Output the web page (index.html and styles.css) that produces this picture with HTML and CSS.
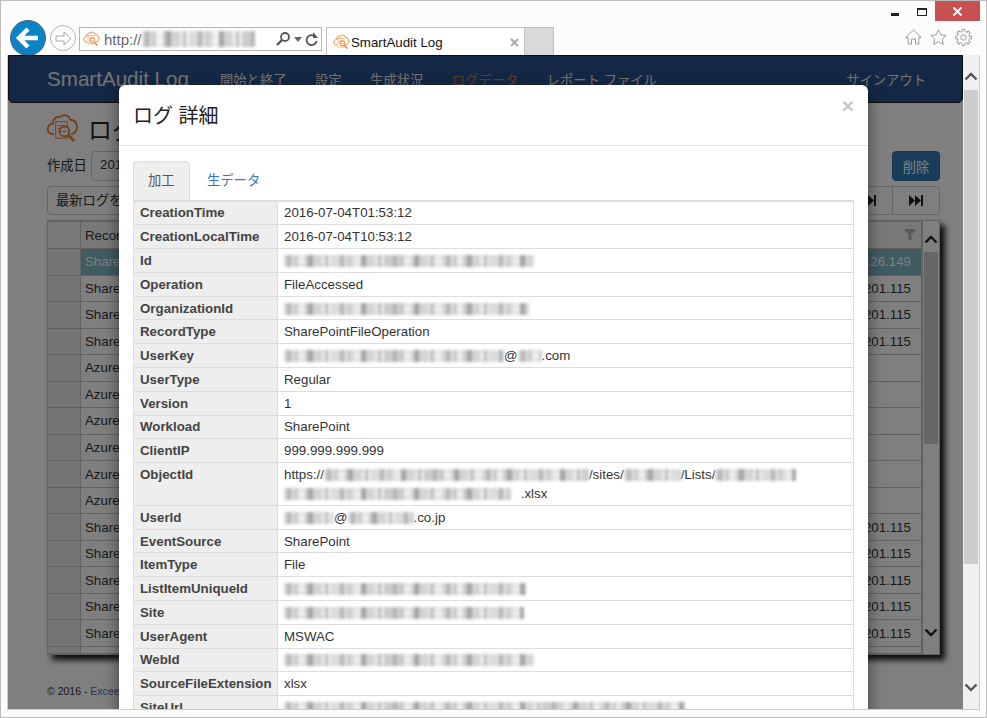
FILE: index.html
```html
<!DOCTYPE html>
<html lang="ja">
<head>
<meta charset="utf-8">
<title>SmartAudit Log</title>
<link rel="stylesheet" href="styles.css">
</head>
<body>
<svg class="defs" width="0" height="0" aria-hidden="true">
  <symbol id="logo" viewBox="0 0 34 32">
    <path d="M8 22C3 22 1 18 2 15C3 12 5 11 7 11C7 6 11 3 15 4C18 1 24 2 25 7C29 7 32 10 32 14C32 18 30 21 26 22" fill="none" stroke="currentColor" stroke-width="2"/>
    <rect x="10" y="9" width="12" height="17" fill="#fff" fill-opacity=".5" stroke="currentColor" stroke-width="1"/>
    <path d="M12 13h8M12 16h3M12 19h3" stroke="currentColor" stroke-width="1"/>
    <circle cx="19" cy="19" r="5" fill="#fff" stroke="currentColor" stroke-width="2"/>
    <path d="M17 19h4" stroke="currentColor" stroke-width="1.5"/>
    <path d="M23 23l6 6" stroke="currentColor" stroke-width="3"/>
  </symbol>
</svg>
<div class="window">
  <header class="chrome">
    <div class="titlebar">
      <span class="win-min"></span>
      <span class="win-max"></span>
      <span class="win-close">
        <svg width="11" height="9" viewBox="0 0 11 9"><path d="M1.500 .5l8 8M9.500 .5l-8 8" stroke="#fff" stroke-width="2"/></svg>
      </span>
    </div>
    <div class="toolbar">
      <span class="back">
        <svg width="34" height="34" viewBox="0 0 34 34"><path d="M8 17h19M17 8l-9 9 9 9" fill="none" stroke="#fff" stroke-width="4.500"/></svg>
      </span>
      <span class="forward">
        <svg width="17" height="15" viewBox="0 0 17 15"><path d="M1 5h8V1l7 6.500-7 6.500v-4H1z" fill="none" stroke="#a8a8a8" stroke-width="1"/></svg>
      </span>
      <div class="address">
        <svg class="favicon"><use href="#logo"/></svg>
        <span class="url">http://</span><span class="redact r-host"></span>
        <span class="addr-tools">
          <svg width="16" height="16" viewBox="0 0 16 16"><circle cx="10" cy="6" r="4" fill="none" stroke="#555" stroke-width="1.800"/><path d="M7 9l-5 5" stroke="#555" stroke-width="2.400"/></svg>
          <svg width="8" height="5" viewBox="0 0 8 5"><path d="M0 0h8L4 5z" fill="#666"/></svg>
          <svg width="13" height="15" viewBox="0 0 13 15"><path d="M10.500 5A5 5 0 1 0 11.500 9" fill="none" stroke="#555" stroke-width="1.800"/><path d="M8 0v6h5z" fill="#555"/></svg>
        </span>
      </div>
      <div class="tab">
        <svg class="favicon"><use href="#logo"/></svg>
        <span class="tab-title">SmartAudit Log</span>
        <svg class="tab-x" width="9" height="9" viewBox="0 0 9 9"><path d="M1 1l7 7M8 1l-7 7" stroke="#aaa" stroke-width="2"/></svg>
      </div>
      <div class="newtab"></div>
      <div class="tools">
        <svg width="17" height="16" viewBox="0 0 17 16"><path d="M.8 8.500L8.500 1l7.700 7.500h-2.400v6.500H10.500V10h-4v5H3.200V8.500z" fill="#fff" stroke="#999" stroke-width="1"/></svg>
        <svg width="17" height="16" viewBox="0 0 17 16"><path d="M8.500 .8l2.300 5 5.400.6-4 3.700 1.100 5.300-4.800-2.700-4.800 2.700 1.100-5.300-4-3.700 5.400-.6z" fill="#fff" stroke="#999" stroke-width="1"/></svg>
        <svg width="17" height="17" viewBox="0 0 17 17" fill="none" stroke="#999" stroke-width="1">
          <circle cx="8.500" cy="8.500" r="2.700"/>
          <circle cx="8.500" cy="8.500" r="6" stroke-dasharray="1.710 3" stroke-dashoffset="-1.500"/>
          <path d="M7 2.600L7.300 .5h2.400L10 2.600"/>
          <path d="M7 2.600L7.300 .5h2.400L10 2.600" transform="rotate(45 8.500 8.500)"/>
          <path d="M7 2.600L7.300 .5h2.400L10 2.600" transform="rotate(90 8.500 8.500)"/>
          <path d="M7 2.600L7.300 .5h2.400L10 2.600" transform="rotate(135 8.500 8.500)"/>
          <path d="M7 2.600L7.300 .5h2.400L10 2.600" transform="rotate(180 8.500 8.500)"/>
          <path d="M7 2.600L7.300 .5h2.400L10 2.600" transform="rotate(225 8.500 8.500)"/>
          <path d="M7 2.600L7.300 .5h2.400L10 2.600" transform="rotate(270 8.500 8.500)"/>
          <path d="M7 2.600L7.300 .5h2.400L10 2.600" transform="rotate(315 8.500 8.500)"/>
        </svg>
      </div>
    </div>
  </header>

  <div class="content-row">
    <main class="viewport">
      <div class="page">
        <nav class="nav">
          <span class="brand">SmartAudit Log</span>
          <a class="nav-item">開始と終了</a>
          <a class="nav-item">設定</a>
          <a class="nav-item">生成状況</a>
          <a class="nav-item active">ログデータ</a>
          <a class="nav-item">レポート ファイル</a>
          <a class="nav-item signout">サインアウト</a>
        </nav>
        <div class="page-body">
          <div class="heading">
            <svg class="heading-icon"><use href="#logo"/></svg>
            <h1>ログ データ</h1>
          </div>
          <div class="filter-row">
            <label>作成日</label>
            <span class="input">2016-07-04</span>
            <span class="spacer"></span>
            <button class="delete">削除</button>
          </div>
          <div class="pager-row">
            <span class="latest">最新ログを表示</span>
            <span class="spacer"></span>
            <span class="pager">
              <span class="pg pg-next"><svg width="14" height="11" viewBox="0 0 14 11"><path d="M0 0l6 5.500L0 11zM6 0l6 5.500L6 11z" fill="#222"/><path d="M12 0h2v11h-2z" fill="#222"/></svg></span>
              <span class="pg"><svg width="14" height="11" viewBox="0 0 14 11"><path d="M0 0l6 5.500L0 11zM6 0l6 5.500L6 11z" fill="#222"/><path d="M12 0h2v11h-2z" fill="#222"/></svg></span>
            </span>
          </div>
          <div class="grid-wrap">
            <table class="grid">
              <thead><tr><th class="g0"></th><th class="g1">RecordType</th><th class="g2"><svg class="funnel" width="10" height="11" viewBox="0 0 10 11"><path d="M0 0h10v2L6.500 5v6h-3V5L0 2z" fill="#b0b0b0"/></svg></th></tr></thead>
              <tbody>
                <tr class="sel"><td class="g0"></td><td>SharePointFileOperation</td><td class="ip">52.108.26.149</td></tr>
                <tr><td class="g0"></td><td>SharePointFileOperation</td><td class="ip">52.109.201.115</td></tr>
                <tr><td class="g0"></td><td>SharePointFileOperation</td><td class="ip">52.109.201.115</td></tr>
                <tr><td class="g0"></td><td>SharePointFileOperation</td><td class="ip">52.109.201.115</td></tr>
                <tr><td class="g0"></td><td>AzureActiveDirectory</td><td class="ip"></td></tr>
                <tr><td class="g0"></td><td>AzureActiveDirectory</td><td class="ip"></td></tr>
                <tr><td class="g0"></td><td>AzureActiveDirectory</td><td class="ip"></td></tr>
                <tr><td class="g0"></td><td>AzureActiveDirectory</td><td class="ip"></td></tr>
                <tr><td class="g0"></td><td>AzureActiveDirectory</td><td class="ip"></td></tr>
                <tr><td class="g0"></td><td>AzureActiveDirectory</td><td class="ip"></td></tr>
                <tr><td class="g0"></td><td>SharePointFileOperation</td><td class="ip">52.109.201.115</td></tr>
                <tr><td class="g0"></td><td>SharePointFileOperation</td><td class="ip">52.109.201.115</td></tr>
                <tr><td class="g0"></td><td>SharePointFileOperation</td><td class="ip">52.109.201.115</td></tr>
                <tr><td class="g0"></td><td>SharePointFileOperation</td><td class="ip">52.109.201.115</td></tr>
                <tr><td class="g0"></td><td>SharePointFileOperation</td><td class="ip">52.109.201.115</td></tr>
                <tr class="stub"><td class="g0"></td><td></td><td></td></tr>
              </tbody>
            </table>
            <div class="grid-scroll">
              <svg class="chev" width="14" height="9" viewBox="0 0 14 9"><path d="M1.500 7.500L7 2l5.500 5.500" fill="none" stroke="#222" stroke-width="2.400"/></svg>
              <div class="grid-track"><div class="grid-thumb"></div></div>
              <svg class="chev" width="14" height="9" viewBox="0 0 14 9"><path d="M1.500 1.500L7 7l5.500-5.500" fill="none" stroke="#222" stroke-width="2.400"/></svg>
            </div>
          </div>
          <footer class="foot">© 2016 - <a>Exceed Corporation</a></footer>
        </div>
      </div>
      <div class="backdrop"></div>
      <section class="modal">
        <div class="modal-head">
          <h2>ログ 詳細</h2>
          <span class="close">×</span>
        </div>
        <div class="modal-body">
          <div class="tabs">
            <span class="mtab on">加工</span>
            <span class="mtab">生データ</span>
          </div>
          <table class="detail">
            <tr><th>CreationTime</th><td>2016-07-04T01:53:12</td></tr>
            <tr><th>CreationLocalTime</th><td>2016-07-04T10:53:12</td></tr>
            <tr><th>Id</th><td><span class="redact r-id"></span></td></tr>
            <tr><th>Operation</th><td>FileAccessed</td></tr>
            <tr><th>OrganizationId</th><td><span class="redact r-org"></span></td></tr>
            <tr><th>RecordType</th><td>SharePointFileOperation</td></tr>
            <tr><th>UserKey</th><td><span class="redact r-key"></span>@<span class="redact r-dom"></span>.com</td></tr>
            <tr><th>UserType</th><td>Regular</td></tr>
            <tr><th>Version</th><td>1</td></tr>
            <tr><th>Workload</th><td>SharePoint</td></tr>
            <tr><th>ClientIP</th><td>999.999.999.999</td></tr>
            <tr><th>ObjectId</th><td>https://<span class="redact r-o1"></span>/sites/<span class="redact r-o2"></span>/Lists/<span class="redact r-o3"></span><br><span class="redact r-o4"></span> .xlsx</td></tr>
            <tr><th>UserId</th><td><span class="redact r-u1"></span>@<span class="redact r-u2"></span>.co.jp</td></tr>
            <tr><th>EventSource</th><td>SharePoint</td></tr>
            <tr><th>ItemType</th><td>File</td></tr>
            <tr><th>ListItemUniqueId</th><td><span class="redact r-list"></span></td></tr>
            <tr><th>Site</th><td><span class="redact r-site"></span></td></tr>
            <tr><th>UserAgent</th><td>MSWAC</td></tr>
            <tr><th>WebId</th><td><span class="redact r-web"></span></td></tr>
            <tr><th>SourceFileExtension</th><td>xlsx</td></tr>
            <tr><th>SiteUrl</th><td><span class="redact r-url"></span></td></tr>
          </table>
        </div>
      </section>
    </main>
    <aside class="page-scroll">
      <svg class="chev" width="14" height="9" viewBox="0 0 14 9"><path d="M1.500 7.500L7 2l5.500 5.500" fill="none" stroke="#555" stroke-width="2.400"/></svg>
      <div class="page-track"><div class="page-thumb"></div></div>
      <svg class="chev" width="14" height="9" viewBox="0 0 14 9"><path d="M1.500 1.500L7 7l5.500-5.500" fill="none" stroke="#555" stroke-width="2.400"/></svg>
    </aside>
  </div>
</div>
</body>
</html>
```
FILE: styles.css
```css
* { box-sizing: border-box; }
html, body { margin: 0; padding: 0; }
body { font-family: "Liberation Sans", "Noto Sans CJK JP", sans-serif; width: 987px; height: 718px; overflow: hidden; background: #fff; }
.defs { position: absolute; }
.window { width: 987px; height: 718px; background: #fcfcfc; border: 1px solid #bbb; display: flex; flex-direction: column; }

/* browser chrome */
.chrome { height: 54px; display: flex; flex-direction: column; flex: none; }
.titlebar { height: 20px; display: flex; justify-content: flex-end; align-items: flex-start; padding-right: 6px; }
.win-min { width: 8px; height: 3px; background: #222; margin-top: 12px; margin-right: 18px; }
.win-max { width: 10px; height: 8px; border: 1px solid #222; border-top-width: 2px; margin-top: 7px; margin-right: 8px; }
.win-close { width: 45px; height: 20px; background: #c75050; display: flex; align-items: center; justify-content: center; }
.toolbar { flex: 1; display: flex; align-items: flex-start; padding-left: 9px; }
.back { width: 36px; height: 36px; border-radius: 50%; background: #0a84c6; border: 1px solid #57606a; display: flex; align-items: center; justify-content: center; margin-top: -1px; flex: none; }
.forward { width: 26px; height: 26px; border-radius: 50%; border: 1px solid #b5b5b5; margin: 4px 3px 0 4px; display: flex; align-items: center; justify-content: center; flex: none; background: #fdfdfd; }
.address { width: 243px; height: 24px; margin-top: 6px; border: 1px solid #b4b4b4; background: #fff; display: flex; align-items: center; padding-left: 3px; font-size: 15px; color: #666; flex: none; }
.favicon { width: 17px; height: 16px; color: #e8803a; flex: none; }
.url { margin-left: 4px; }
.addr-tools { margin-left: auto; display: flex; align-items: center; gap: 3px; padding-right: 3px; }
.tab { width: 199px; height: 29px; margin: 6px 0 0 4px; background: #fff; border: 1px solid #c0c0c0; border-bottom: 0; display: flex; align-items: center; padding: 0 5px 0 6px; font-size: 13.300px; color: #111; flex: none; }
.tab-title { margin-left: 1px; }
.tab-x { margin-left: auto; }
.newtab { width: 29px; height: 28px; margin-top: 6px; background: #d9d9d9; border: 1px solid #c0c0c0; border-left: 0; border-bottom: 0; flex: none; }
.tools { margin-left: auto; margin-top: 8px; padding-right: 14px; display: flex; gap: 8px; }

/* page area */
.content-row { height: 655px; display: flex; flex: none; margin-left: 6px; width: 973px; border-left: 1px solid #ccc; border-right: 1px solid #ccc; border-bottom: 1px solid #ccc; }
.viewport { width: 955px; position: relative; overflow: hidden; background: #fff; flex: none; }
.page { display: flex; flex-direction: column; height: 100%; }
.nav { height: 48px; flex: none; background: #28508b; border: 1px solid #1a1a1a; border-radius: 0 0 5px 5px; display: flex; align-items: center; padding: 0 36px 0 38px; color: #eee; font-size: 13.300px; }
.brand { font-size: 20.600px; color: #e8e8e8; width: 173px; }
.nav-item { color: #e6e6e6; white-space: nowrap; margin-right: 28.500px; }
.nav-item.active { color: #b4805e; }
.nav-item.signout { margin-left: auto; margin-right: 0; }
.page-body { padding: 9px 23px 0 39px; flex: 1; display: flex; flex-direction: column; color: #333; font-size: 13.300px; }
.heading { display: flex; align-items: center; height: 32px; gap: 9px; }
.heading-icon { width: 33px; height: 31px; color: #e8803a; margin-left: -1px; }
h1 { font-size: 24px; font-weight: 400; margin: 0; color: #222; }
.filter-row { display: flex; align-items: center; height: 30px; margin-top: 7px; }
.filter-row label { width: 44px; padding-bottom: 4px; }
.input { width: 150px; height: 30px; border: 1px solid #ccc; border-radius: 4px; padding: 5px 8px; }
.spacer { flex: 1; }
.delete { width: 48px; height: 30px; background: #337ab7; border: 1px solid #2e6da4; border-radius: 4px; color: #fff; font: inherit; padding: 0; }
.pager-row { display: flex; align-items: center; height: 29px; margin-top: 5px; }
.latest { width: 160px; height: 29px; border: 1px solid #ccc; border-radius: 4px; padding: 3px 8px; }
.pager { display: flex; border: 1px solid #ccc; border-radius: 4px; height: 29px; }
.pg { width: 47px; height: 27px; display: flex; align-items: center; justify-content: center; }
.pg + .pg { border-left: 1px solid #ccc; }
.grid-wrap { margin-top: 5px; display: flex; height: 435px; width: 893px; border: 1px solid #c4c4c4; box-shadow: 5px 5px 6px rgba(0,0,0,.9); flex: none; background: #fff; }
.grid { border-collapse: collapse; table-layout: fixed; width: 875px; height: 100%; margin-left: -1px; }
.grid th, .grid td { border: 1px solid #c4c4c4; padding: 0 4px; font-size: 13.300px; font-weight: 400; text-align: left; height: 26.500px; overflow: hidden; white-space: nowrap; }
.g0 { width: 33px; background: #e8e8e8; }
.grid th { height: 27px; background: #f0f0f0; }
.g2 { width: 110px; position: relative; }
.funnel { position: absolute; right: 6px; top: 7px; }
.ip { padding-right: 10px !important; text-align: right !important; }
.sel td { background: #7fb4c3; color: #fff; }
.sel .g0 { background: #e8e8e8; }
.stub td { height: 7px; }
.grid-scroll { width: 17px; display: flex; flex-direction: column; align-items: center; padding-top: 14px; border-left: 1px solid #c4c4c4; }
.grid-track { flex: 1; width: 100%; padding-top: 8px; }
.grid-thumb { height: 192px; width: 14px; margin: 0 auto; background: #cdcdcd; }
.grid-scroll .chev:last-child { margin-bottom: 17px; }
.foot { margin-top: 30px; font-size: 10.500px; }
.foot a { color: #337ab7; }
.backdrop { position: absolute; inset: 0; background: rgba(0,0,0,.5); }

/* modal */
.modal { position: absolute; left: 111px; top: 30px; width: 749px; height: 700px; background: #fff; border-radius: 6px; box-shadow: 0 5px 15px rgba(0,0,0,.5); color: #333; }
.modal-head { height: 61px; border-bottom: 1px solid #e5e5e5; padding: 16px 14px 14px; position: relative; }
h2 { font-size: 20px; font-weight: 400; margin: 0; line-height: 30px; color: #222; }
.close { position: absolute; right: 14px; top: 9px; font-size: 21px; font-weight: 700; color: #c8c8c8; line-height: 24px; }
.modal-body { padding: 15px 14px; }
.tabs { height: 38.500px; display: flex; font-size: 13.300px; }
.mtab { height: 38.500px; padding: 8px 14px; color: #337ab7; border: 1px solid transparent; white-space: nowrap; }
.mtab.on { width: 57px; background: #eee; color: #555; border-color: #ddd; border-bottom: 0; border-radius: 4px 4px 0 0; }
.mtab + .mtab { margin-left: 2px; }
.detail { border-collapse: collapse; width: 721px; table-layout: fixed; border: 1px solid #ddd; border-top: 2px solid #ddd; font-size: 13.300px; line-height: 19px; }
.detail th, .detail td { border: 1px solid #ddd; padding: 1.900px 5px 1.900px 6px; text-align: left; vertical-align: top; }
.detail th { width: 144px; background: #eee; color: #444; font-weight: 700; white-space: nowrap; }

/* obscured values */
.redact { display: inline-block; height: 12px; vertical-align: -2px; filter: blur(1.600px); background-color: #e6e6e6;
  background-image:
    repeating-linear-gradient(90deg, transparent 0 3px, #b4b4b4 3px 7px, transparent 7px 11px, #c8c8c8 11px 14px, transparent 14px 24px, #a4a4a4 24px 29px, #d4d4d4 29px 37px, transparent 37px 41px, #bcbcbc 41px 44px, transparent 44px 53px),
    repeating-linear-gradient(90deg, #d8d8d8 0 12px, transparent 12px 21px, #cccccc 21px 38px, transparent 38px 47px, #dcdcdc 47px 71px, transparent 71px 79px),
    repeating-linear-gradient(0deg, transparent 0 4px, rgba(255,255,255,.45) 4px 8px); }
.r-host { width: 113px; height: 16px; background-color: #eee; }
.r-id { width: 250px; }
.r-org { width: 245px; }
.r-key { width: 220px; }
.r-dom { width: 24px; }
.r-o1 { width: 265px; }
.r-o2 { width: 57px; }
.r-o3 { width: 81px; }
.r-o4 { width: 227px; margin-right: 6px; }
.r-u1 { width: 50px; }
.r-u2 { width: 66px; }
.r-list { width: 242px; }
.r-site { width: 240px; }
.r-web { width: 250px; }
.r-url { width: 401px; }

/* browser scrollbar */
.page-scroll { width: 16px; background: #f0f0f0; display: flex; flex-direction: column; align-items: center; padding: 17px 0; flex: none; }
.page-track { flex: 1; width: 100%; padding-top: 9px; }
.page-thumb { height: 474px; margin: 0 1px; background: #cdcdcd; }
```
